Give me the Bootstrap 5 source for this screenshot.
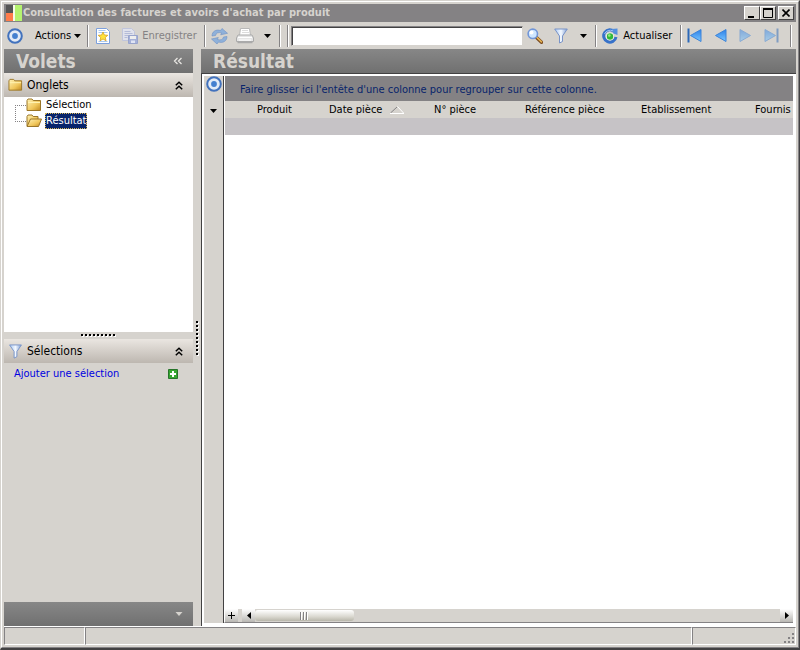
<!DOCTYPE html>
<html lang="fr">
<head>
<meta charset="utf-8">
<meta name="viewport" content="width=device-width, initial-scale=1">
<title>Consultation des factures et avoirs d'achat par produit</title>
<link href="https://cdn.jsdelivr.net/npm/bootstrap@5.3.0/dist/css/bootstrap.min.css" rel="stylesheet">
<style>
:root { --face: #d6d3ce; --bar: #848284; --dark: #424142; --ui: "DejaVu Sans Condensed", "DejaVu Sans", sans-serif; }
body { font-family: var(--ui); font-size: 11px; line-height: 16px; color: #000; background: var(--face); }
button { font: inherit; color: inherit; background: none; border: 0; padding: 0; }
svg { display: block; flex: none; }
.app-window { height: 100vh; border: 1px solid var(--face); border-right-color: var(--dark); border-bottom: 2px solid var(--dark); }
.app-frame { border: 1px solid #fff; border-right-color: var(--bar); border-bottom-color: var(--bar); padding: 2px; }
.title-bar { height: 18px; background: var(--bar); color: var(--face); font-weight: 700; padding: 0 2px 0 1px; }
.title-bar h1 { font: inherit; margin: 0; }
.win-btn { width: 16px; height: 14px; background: var(--face); border: 1px solid #fff; border-right-color: var(--dark); border-bottom-color: var(--dark); display: flex; align-items: center; justify-content: center; }
.win-close { margin-left: 2px; }
.tool-bar { height: 27px; padding-left: 3px; }
.tool-bar button { flex: none; }
.tool-sep { width: 2px; height: 22px; border-left: 1px solid var(--bar); border-right: 1px solid #fff; flex: none; }
.off { color: #848284; }
.search-box { width: 232px; height: 20px; padding: 0 4px; background: #fff; border: 1px solid var(--face); border-top: 1px solid var(--bar); border-left: 1px solid var(--bar); box-shadow: inset 1px 1px var(--dark); outline: 0; margin: 0 4px 0 2px; }
.t-actions { margin-left: 12px; } .t-sep1 { margin-left: 6px; } .t-new { margin-left: 7px; }
.t-save { margin-left: 12px; gap: 4px; width: 74px; white-space: nowrap; } .t-sep2 { margin-left: 8px; }
.t-sync { margin-left: 5px; } .t-print { margin-left: 8px; } .t-caret { margin-left: 10px; }
.t-sep3 { margin-left: 8px; } .t-sep4 { margin-left: 6px; }
.t-filter { margin-left: 11px; } .t-caret2 { margin-left: 12px; } .t-sep5 { margin-left: 8px; }
.t-refresh { margin-left: 5px; gap: 5px; width: 70px; white-space: nowrap; } .t-sep6 { margin-left: 8px; }
.t-first { margin-left: 5px; } .t-nav { margin-left: 12px; }
.side { width: 189px; flex: none; }
.head-bar { height: 24px; flex: none; color: var(--face); background: linear-gradient(#878787, #707070); }
.head-bar h2 { font-size: 19px; line-height: 24px; font-weight: 700; margin: 0; }
.side .head-bar, .side .group-head { padding-right: 10px; }
.group-head { height: 24px; flex: none; font-size: 12px; background: linear-gradient(#eae6e1, #d6d1cb 45%, #bdb7b0); }
.group-head h3 { font: inherit; margin: 0; }
.tree-pane { height: 235px; flex: none; background: #fff; padding-left: 11px; }
.tree-list { list-style: none; margin: 0; padding: 0; }
.tree-list li { height: 16px; display: flex; align-items: center; }
.tree-list button { height: 16px; line-height: 16px; padding: 0 1px; margin-left: 3px; }
.tree-list .picked { background: #08246b; color: #fff; outline: 1px dotted #d8b858; outline-offset: -1px; }
.split-h { height: 7px; flex: none; }
.split-v { width: 8px; flex: none; padding: 272px 0 0 3px; }
.add-row { padding: 3px 15px 0 10px; }
.add-link { color: #0000e0; text-decoration: none; }
.result-frame { border: 1px solid var(--dark); border-right: 0; border-bottom: 0; background: #fff; padding: 2px 3px 3px 2px; }
.rail { width: 20px; flex: none; background: var(--face); border-right: 1px solid var(--dark); }
.rail-caret { margin-top: 17px; }
.grid-area { border-left: 1px solid #fff; border-bottom: 1px solid var(--bar); }
.drop-zone { height: 25px; flex: none; background: var(--bar); color: #08246b; padding: 0 15px; line-height: 27px; }
.grid-table { width: 100%; table-layout: fixed; border-collapse: collapse; }
.grid-table th { height: 17px; padding: 0; font-weight: 400; line-height: 17px; white-space: nowrap; overflow: hidden; background: var(--face); }
.grid-table td { height: 17px; padding: 0; background: #c6c3c6; }
.c-mark { width: 32px; } .c-prod { width: 72px; } .c-date { width: 105px; } .c-num { width: 91px; } .c-ref { width: 116px; } .c-etab { width: 114px; }
.scroll-row { height: 13px; background: var(--face); flex: none; }
.scroll-btn { width: 13px; height: 13px; display: flex; align-items: center; justify-content: center; background: linear-gradient(#fff, #b9b7b3); }
.thumb { width: 99px; height: 11px; border-radius: 3px; background: linear-gradient(#fff, #dad8d0 60%, #b8b6aa); display: flex; align-items: center; justify-content: center; }
.status-bar { height: 19px; flex: none; border-top: 1px solid #fff; }
.status-cell { border: 1px solid var(--bar); border-right-color: #fff; border-bottom-color: #fff; }
.s-one { width: 81px; } .s-three { width: 104px; }
</style>
</head>
<body>
<svg width="0" height="0" class="position-absolute" aria-hidden="true">
<defs>
<linearGradient id="gold" x1="0" y1="0" x2="1" y2="1"><stop stop-color="#fff3b8"/><stop offset=".6" stop-color="#f0c65a"/><stop offset="1" stop-color="#c08820"/></linearGradient>
<linearGradient id="blue" x1="0" y1="0" x2="0" y2="1"><stop stop-color="#2b7fe8"/><stop offset="1" stop-color="#7cc8ff"/></linearGradient>
<linearGradient id="glass" x1="0" y1="0" x2="1" y2="0"><stop stop-color="#a9c8f4"/><stop offset=".5" stop-color="#f4f9ff"/><stop offset="1" stop-color="#7d9dd4"/></linearGradient>
<symbol id="target" viewBox="0 0 16 16"><circle cx="8" cy="8" r="6.8" fill="#e3ebf6" stroke="#4272bd" stroke-width="2"/><circle cx="8" cy="8" r="2.900" fill="#4580cf"/></symbol>
<symbol id="folder" viewBox="0 0 16 14"><path d="M1 2.500 2 1h4l1.200 1.500H14.500V12.500H1z" fill="url(#gold)" stroke="#9b7628"/><path d="M2 4.500h12" stroke="#fff2b0"/></symbol>
<symbol id="funnel" viewBox="0 0 14 16"><path d="M.7 1h12.600L8.500 8v5.500L5.500 15V8z" fill="url(#glass)" stroke="#7893c8"/></symbol>
<symbol id="caret" viewBox="0 0 7 4"><path d="M0 0h7L3.500 4z" fill="currentColor"/></symbol>
<symbol id="up2" viewBox="0 0 8 9"><path d="m.8 4.200 3.200-3 3.200 3M.8 8.200l3.200-3 3.200 3" fill="none" stroke="#000" stroke-width="1.500"/></symbol>
</defs>
</svg>
<div class="app-window d-flex flex-column">
<div class="app-frame d-flex flex-column flex-grow-1 overflow-hidden">
<header class="title-bar d-flex align-items-center">
<svg width="18" height="16" viewBox="0 0 18 16"><path fill="#555" d="M1 0h7v8H1z"/><path fill="#ff7c4a" d="M1 8h7v8H1z"/><path fill="#b5f36f" d="M9 0h8v16H9z"/><path fill="#f7fbe8" d="M8 0h2v16H8z"/></svg>
<h1 class="text-truncate">Consultation des factures et avoirs d'achat par produit</h1>
<div class="d-flex ms-auto">
<button class="win-btn" aria-label="Réduire"><svg width="10" height="10"><path d="M1 8h6v2H1z"/></svg></button>
<button class="win-btn" aria-label="Agrandir"><svg width="10" height="10"><path d="M.5 1h9v8.500h-9z" fill="none" stroke="#000"/><path d="M0 0h10v2H0z"/></svg></button>
<button class="win-btn win-close" aria-label="Fermer"><svg width="8" height="8"><path d="m.5.500 7 7m0-7-7 7" stroke="#000" stroke-width="1.600"/></svg></button>
</div>
</header>
<nav class="tool-bar d-flex align-items-center flex-shrink-0" aria-label="Outils">
<button aria-label="Cible"><svg width="16" height="16"><use href="#target"/></svg></button>
<button class="d-flex align-items-center t-actions">Actions&nbsp;<svg width="7" height="4"><use href="#caret"/></svg></button>
<span class="tool-sep t-sep1"></span>
<button class="t-new" aria-label="Nouveau"><svg width="14" height="16"><path d="M.5.500h10l3 3v12H.500z" fill="#fff" stroke="#7da0dc"/><path d="M2.500 2.500h7M2.500 4.500h9M2.500 13.500h9" stroke="#a9c8ef"/><path d="m7 4 1.400 3 3.400.3-2.500 2.200.8 3.300L7 11l-3 1.800.7-3.300-2.500-2.200L5.600 7z" fill="#ffe23c" stroke="#d09a1a" stroke-width=".7"/></svg></button>
<button class="d-flex align-items-center off t-save"><svg width="16" height="16"><path d="M.5.500h9l3 3v9H.500z" fill="#e0e2ec" stroke="#c0c5dc"/><path d="M2.500 3.500h6M2.500 5.500h8M2.500 7.500h4M2.500 9.500h3" stroke="#b4bbd8"/><path d="M6.500 7.500h9v8h-9z" fill="#a6b1d8" stroke="#98a4cc"/><path d="M8 8h6v3H8z" fill="#eee"/><path d="M9 12.500h4V15H9z" fill="#dfe4f4"/></svg>Enregistrer</button>
<span class="tool-sep t-sep2"></span>
<button class="t-sync" aria-label="Synchroniser"><svg width="17" height="16"><path d="M1 8C1 3.500 5 1 9.500 2.500L11 .5l5.500 4.800-6.800 1.500 1-1.900C7 4 5 5 4.500 7.500z" fill="#8fb1da" stroke="#6d91c4" stroke-width=".6"/><path d="M16 8.500c0 4.500-4 7-8.500 5.500L6 16 .5 11l6.800-1.500-1 2c3.700 1 5.700 0 6.200-2.500z" fill="#8fb1da" stroke="#6d91c4" stroke-width=".6"/></svg></button>
<button class="t-print" aria-label="Imprimer"><svg width="18" height="16"><path d="M4.500.500h9l1 7h-11z" fill="#fff" stroke="#b8b8b8"/><path d="M6 2.500h6M6 4.500h7" stroke="#dcdcdc"/><path d="M2 7h14l1.500 3v3.500H.500V10z" fill="#e6e6e6" stroke="#aaa"/><path d="M2 9.500h14M3 12h12" stroke="#fff"/><path d="M1.500 14.500h15" stroke="#aaa" stroke-width="1.500"/></svg></button>
<button class="t-caret" aria-label="Options d'impression"><svg width="7" height="4"><use href="#caret"/></svg></button>
<span class="tool-sep t-sep3"></span><span class="tool-sep t-sep4"></span>
<input class="search-box" type="text" aria-label="Rechercher">
<button aria-label="Chercher"><svg width="16" height="16"><path d="m9.500 9.500 5 4.800" stroke="#7a4b20" stroke-width="3.400" stroke-linecap="round"/><path d="m10 9.500 4.500 4.300" stroke="#e6b351" stroke-width="1.600" stroke-linecap="round"/><circle cx="5.800" cy="5.800" r="4.700" fill="#cfe7ff" stroke="#7196d8" stroke-width="1.600"/><circle cx="4.500" cy="4.500" r="2" fill="#fff"/></svg></button>
<button class="t-filter" aria-label="Filtrer"><svg width="14" height="16"><use href="#funnel"/></svg></button>
<button class="t-caret2" aria-label="Options de filtre"><svg width="7" height="4"><use href="#caret"/></svg></button>
<span class="tool-sep t-sep5"></span>
<button class="d-flex align-items-center t-refresh"><svg width="16" height="16"><path d="M12.500 3.800A6.200 6.200 0 1 0 14 9" fill="none" stroke="#3772c9" stroke-width="3"/><path d="m9.500 1 6-.5V7l-4-1.500z" fill="#548fde"/><path d="M11 2.900A6.200 6.200 0 0 0 2.500 6" fill="none" stroke="#9dc3f3"/><circle cx="8" cy="8.500" r="3.800" fill="#fff"/><circle cx="8" cy="8.500" r="3.200" fill="#32b83a"/><circle cx="7.300" cy="7.500" r="1.300" fill="#98eb85"/></svg>Actualiser</button>
<span class="tool-sep t-sep6"></span>
<button class="t-first" aria-label="Premier"><svg width="15" height="15"><path d="M1.500.500v14" stroke="#2c68b8" stroke-width="2"/><path d="M14 1.500v12L3.500 7.500z" fill="url(#blue)" stroke="#3c83d8"/></svg></button>
<button class="t-nav" aria-label="Précédent"><svg width="13" height="15"><path d="M12 1.500v12L1.500 7.500z" fill="url(#blue)" stroke="#3c83d8"/></svg></button>
<button class="t-nav opacity-50" disabled aria-label="Suivant"><svg width="13" height="15"><path d="M1 1.500v12l10.500-6z" fill="url(#blue)" stroke="#3c83d8"/></svg></button>
<button class="t-nav opacity-50" disabled aria-label="Dernier"><svg width="15" height="15"><path d="M13.500.500v14" stroke="#2c68b8" stroke-width="2"/><path d="M1 1.500v12l10.500-6z" fill="url(#blue)" stroke="#3c83d8"/></svg></button>
<span class="tool-sep ms-auto me-1"></span>
</nav>
<main class="d-flex flex-grow-1 overflow-hidden">
<aside class="side d-flex flex-column">
<div class="head-bar d-flex align-items-center justify-content-between ps-2"><h2 class="ms-1">Volets</h2><button aria-label="Replier"><svg width="10" height="8"><path d="M4.500 1 1.500 4l3 3m4-6-3 3 3 3" fill="none" stroke="#e8e6e2" stroke-width="1.300"/></svg></button></div>
<div class="group-head d-flex align-items-center ps-1 gap-1"><svg width="15" height="14"><use href="#folder"/></svg><h3>Onglets</h3><button class="ms-auto" aria-label="Réduire Onglets"><svg width="8" height="9"><use href="#up2"/></svg></button></div>
<div class="tree-pane d-flex">
<svg width="11" height="32"><path d="M.5 8v16M0 8.500h11M0 24.500h11" fill="none" stroke="#848284" stroke-dasharray="1 1"/></svg>
<ul class="tree-list">
<li><svg width="16" height="14"><use href="#folder"/></svg><button>Sélection</button></li>
<li><svg width="16" height="14"><path d="M1 12V2.500L2 1h4l1.200 1.500H12V5" fill="url(#gold)" stroke="#9b7628"/><path d="M1 12.500 4.500 5h11l-3 7.500z" fill="url(#gold)" stroke="#9b7628"/></svg><button class="picked">Résultat</button></li>
</ul>
</div>
<div class="split-h d-flex align-items-center justify-content-center"><svg width="36" height="3"><path d="M1 2h36" stroke="#fff" stroke-width="2" stroke-dasharray="2 2"/><path d="M0 1h36" stroke="#000" stroke-width="2" stroke-dasharray="2 2"/></svg></div>
<div class="group-head d-flex align-items-center ps-1 gap-1"><svg width="15" height="15"><use href="#funnel"/></svg><h3>Sélections</h3><button class="ms-auto" aria-label="Réduire Sélections"><svg width="8" height="9"><use href="#up2"/></svg></button></div>
<div class="add-row d-flex align-items-center justify-content-between"><a class="add-link" href="#">Ajouter une sélection</a><button aria-label="Ajouter"><svg width="10" height="10"><path d="M.5.500h9v9h-9z" fill="#36a52f" stroke="#26742a"/><path d="M5 2v6M2 5h6" stroke="#fff" stroke-width="2"/></svg></button></div>
<div class="head-bar d-flex align-items-center justify-content-end mt-auto"><button aria-label="Plus de volets"><svg width="8" height="4"><use href="#caret"/></svg></button></div>
</aside>
<div class="split-v"><svg width="3" height="35"><path d="M2 1v35" stroke="#fff" stroke-width="2" stroke-dasharray="2 2"/><path d="M1 0v35" stroke="#000" stroke-width="2" stroke-dasharray="2 2"/></svg></div>
<section class="d-flex flex-column flex-grow-1 overflow-hidden">
<div class="head-bar ps-2"><h2 class="ms-1">Résultat</h2></div>
<div class="result-frame d-flex flex-grow-1 overflow-hidden">
<div class="rail d-flex flex-column align-items-center"><button aria-label="Cible"><svg width="16" height="16"><use href="#target"/></svg></button><button class="rail-caret" aria-label="Menu"><svg width="7" height="4"><use href="#caret"/></svg></button></div>
<div class="grid-area d-flex flex-column flex-grow-1 overflow-hidden">
<div class="drop-zone text-truncate">Faire glisser ici l'entête d'une colonne pour regrouper sur cette colonne.</div>
<table class="grid-table">
<thead><tr><th class="c-mark"></th><th class="c-prod">Produit</th><th class="c-date">Date pièce <svg class="d-inline-block ms-1" width="14" height="8"><path d="m.5 7 6.500-6" stroke="#848284"/><path d="M0 7.500h14L7.500.500" fill="none" stroke="#fff"/></svg></th><th class="c-num">N° pièce</th><th class="c-ref">Référence pièce</th><th class="c-etab">Etablissement</th><th>Fournis</th></tr></thead>
<tbody><tr><td colspan="7"></td></tr></tbody>
</table>
<div class="scroll-row d-flex align-items-center mt-auto">
<button class="scroll-btn" aria-label="Ajouter une ligne"><svg width="7" height="7"><path d="M3.500 0v7M0 3.500h7" stroke="#000"/></svg></button>
<button class="scroll-btn ms-1" aria-label="Défiler à gauche"><svg width="4" height="7"><path d="M4 0v7L0 3.500z"/></svg></button>
<div class="thumb"><svg width="9" height="8"><path d="M.5 0v8M3.500 0v8M6.500 0v8" stroke="#848284"/><path d="M1.500 0v8M4.500 0v8M7.500 0v8" stroke="#fff"/></svg></div>
<button class="scroll-btn ms-auto" aria-label="Défiler à droite"><svg width="4" height="7"><path d="M0 0v7l4-3.500z"/></svg></button>
</div>
</div>
</div>
</section>
</main>
<footer class="status-bar d-flex"><div class="status-cell s-one"></div><div class="status-cell flex-grow-1"></div><div class="status-cell s-three d-flex justify-content-end align-items-end"><svg width="12" height="12"><path d="M9 1h2v2H9zM9 5h2v2H9zM5 5h2v2H5zM9 9h2v2H9zM5 9h2v2H5zM1 9h2v2H1z" fill="#848284"/></svg></div></footer>
</div>
</div>
<script src="https://cdn.jsdelivr.net/npm/bootstrap@5.3.0/dist/js/bootstrap.bundle.min.js"></script>
</body>
</html>
